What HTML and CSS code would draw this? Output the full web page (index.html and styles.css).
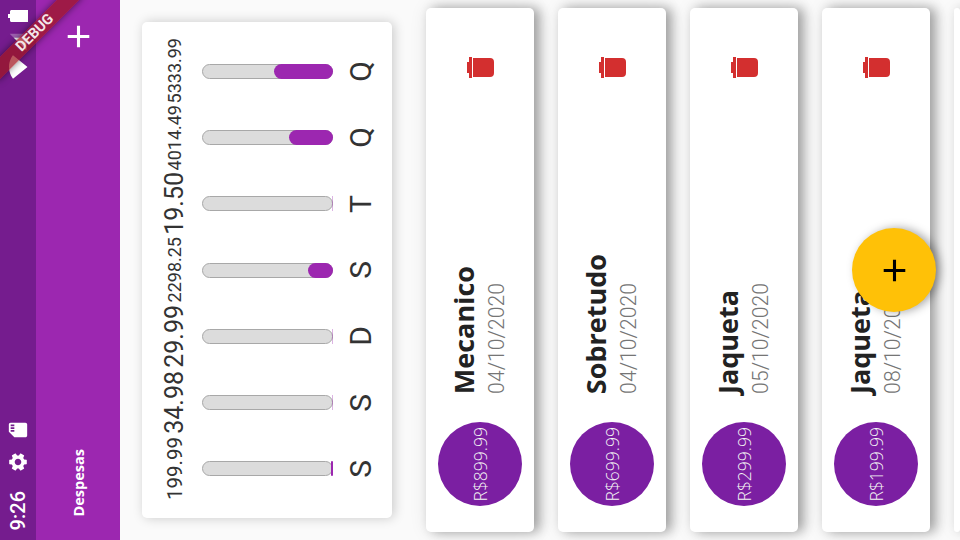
FILE: index.html
```html
<!DOCTYPE html>
<html lang="pt-BR">
<head>
    <meta charset="UTF-8">
    <title>Despesas</title>
    <link rel="stylesheet" href="styles.css">
</head>
<body>

<div class="stage">
    <div class="status">
        <span class="time">9:26</span>
        <svg class="status-icon turned gear" viewBox="0 0 24 24"><path d="M19.14 12.94c.04-.3.06-.61.06-.94 0-.32-.02-.64-.07-.94l2.03-1.58c.18-.14.23-.41.12-.61l-1.92-3.32c-.12-.22-.37-.29-.59-.22l-2.39.96c-.5-.38-1.03-.7-1.62-.94l-.36-2.54c-.04-.24-.24-.41-.48-.41h-3.84c-.24 0-.43.17-.47.41l-.36 2.54c-.59.24-1.13.57-1.62.94l-2.39-.96c-.22-.08-.47 0-.59.22L2.74 8.87c-.12.21-.08.47.12.61l2.03 1.58c-.05.3-.09.63-.09.94s.02.64.07.94l-2.03 1.58c-.18.14-.23.41-.12.61l1.92 3.32c.12.22.37.29.59.22l2.39-.96c.5.38 1.03.7 1.62.94l.36 2.54c.05.24.24.41.48.41h3.84c.24 0 .44-.17.47-.41l.36-2.54c.59-.24 1.13-.56 1.62-.94l2.39.96c.22.08.47 0 .59-.22l1.92-3.32c.12-.22.07-.47-.12-.61l-2.01-1.58zM12 15.6c-1.98 0-3.6-1.62-3.6-3.6s1.62-3.6 3.6-3.6 3.6 1.62 3.6 3.6-1.62 3.6-3.6 3.6z"/></svg>
        <svg class="status-icon turned sd" viewBox="0 0 24 24"><path d="M18 2h-8L4.02 8 4 20c0 1.1.9 2 2 2h12c1.1 0 2-.9 2-2V4c0-1.1-.9-2-2-2zm-6 6h-2V4h2v4zm3 0h-2V4h2v4zm3 0h-2V4h2v4z"/></svg>
        <svg class="status-icon turned wifi" viewBox="0 0 24 24"><path d="M12.01 21.49L23.64 7c-.45-.34-4.93-4-11.64-4C5.28 3 .81 6.66.36 7l11.64 14.49z"/></svg>
        <svg class="status-icon turned cell" viewBox="0 0 24 24"><path fill-opacity=".3" d="M2 22h20V2z"/><path d="M17 7L2 22h15z"/></svg>
        <svg class="status-icon battery" viewBox="0 0 20 12"><path d="M0 4h2V1.500C2 .7 2.700 0 3.500 0H20v12H3.500C2.700 12 2 11.300 2 10.500V8H0z"/></svg>
    </div>

    <div class="appbar">
        <span class="appbar-title">Despesas</span>
        <svg class="plus plus-white" viewBox="0 0 24 24"><path d="M19 13h-6v6h-2v-6H5v-2h6V5h2v6h6v2z"/></svg>
    </div>

    <div class="chart-card">
        <div class="chart-col">
            <span class="chart-value" style="font-size: 20.5px">199.99</span>
            <div class="bar"><div class="bar-fill" style="block-size: 1.7%"></div></div>
            <span class="chart-day">S</span>
        </div>
        <div class="chart-col">
            <span class="chart-value" style="font-size: 25px">34.98</span>
            <div class="bar"><div class="bar-fill bar-fill-thin"></div></div>
            <span class="chart-day">S</span>
        </div>
        <div class="chart-col">
            <span class="chart-value" style="font-size: 25px">29.99</span>
            <div class="bar"><div class="bar-fill bar-fill-thin"></div></div>
            <span class="chart-day">D</span>
        </div>
        <div class="chart-col">
            <span class="chart-value" style="font-size: 18px">2298.25</span>
            <div class="bar"><div class="bar-fill" style="block-size: 19.7%"></div></div>
            <span class="chart-day">S</span>
        </div>
        <div class="chart-col">
            <span class="chart-value" style="font-size: 25px">19.50</span>
            <div class="bar"><div class="bar-fill bar-fill-thin"></div></div>
            <span class="chart-day">T</span>
        </div>
        <div class="chart-col">
            <span class="chart-value" style="font-size: 18px">4014.49</span>
            <div class="bar"><div class="bar-fill" style="block-size: 34.4%"></div></div>
            <span class="chart-day">Q</span>
        </div>
        <div class="chart-col">
            <span class="chart-value" style="font-size: 18px">5333.99</span>
            <div class="bar"><div class="bar-fill" style="block-size: 45.7%"></div></div>
            <span class="chart-day">Q</span>
        </div>
    </div>

    <div class="list">
        <div class="card">
            <div class="avatar">R$899.99</div>
            <div class="card-text">
                <span class="card-title">Mecanico</span>
                <span class="card-date">04/10/2020</span>
            </div>
            <svg class="trash" viewBox="0 0 27 21"><path d="M0 5h2v11H0zM2 0h3v21H2zM6 1h17a4 4 0 0 1 4 4v11a4 4 0 0 1-4 4H6z"/></svg>
        </div>
        <div class="card">
            <div class="avatar">R$699.99</div>
            <div class="card-text">
                <span class="card-title">Sobretudo</span>
                <span class="card-date">04/10/2020</span>
            </div>
            <svg class="trash" viewBox="0 0 27 21"><path d="M0 5h2v11H0zM2 0h3v21H2zM6 1h17a4 4 0 0 1 4 4v11a4 4 0 0 1-4 4H6z"/></svg>
        </div>
        <div class="card">
            <div class="avatar">R$299.99</div>
            <div class="card-text">
                <span class="card-title">Jaqueta</span>
                <span class="card-date">05/10/2020</span>
            </div>
            <svg class="trash" viewBox="0 0 27 21"><path d="M0 5h2v11H0zM2 0h3v21H2zM6 1h17a4 4 0 0 1 4 4v11a4 4 0 0 1-4 4H6z"/></svg>
        </div>
        <div class="card">
            <div class="avatar">R$199.99</div>
            <div class="card-text">
                <span class="card-title">Jaqueta</span>
                <span class="card-date">08/10/2020</span>
            </div>
            <svg class="trash" viewBox="0 0 27 21"><path d="M0 5h2v11H0zM2 0h3v21H2zM6 1h17a4 4 0 0 1 4 4v11a4 4 0 0 1-4 4H6z"/></svg>
        </div>
        <div class="card card-cut"></div>
    </div>

    <button class="fab"><svg class="plus" viewBox="0 0 24 24"><path d="M19 13h-6v6h-2v-6H5v-2h6V5h2v6h6v2z"/></svg></button>
    <div class="banner">DEBUG</div>
</div>

</body>
</html>
```

FILE: styles.css
```css
html, body {
    margin: 0;
    width: 960px;
    height: 540px;
    overflow: hidden;
    background-color: #fafafa;
}

/* the app is on its side: blocks run left to right, text runs bottom to top */
.stage {
    position: relative;
    display: flex;
    flex-direction: column;
    width: 960px;
    height: 540px;
    overflow: hidden;
    writing-mode: sideways-lr;
    background-color: #fafafa;
    font-family: "Open Sans", sans-serif;
}

.status {
    display: flex;
    align-items: center;
    flex: none;
    block-size: 36px;
    padding-inline: 10px;
    background-color: #751c8e;
    color: #fff;
}
.time {
    inline-size: 42px;
    font-family: Roboto, sans-serif;
    font-size: 20px;
    font-weight: 500;
}
.status-icon {
    flex: none;
    fill: #fff;
}
.turned {
    transform: rotate(-90deg);
}
.gear {
    width: 22px;
    height: 22px;
    margin-inline-start: 15px;
}
.sd {
    width: 22px;
    height: 22px;
    margin-inline-start: 10px;
}
.wifi {
    width: 24px;
    height: 24px;
    margin-inline-start: auto;
}
.cell {
    width: 20px;
    height: 20px;
    margin-inline-start: 3px;
}
.battery {
    width: 20px;
    height: 12px;
    margin-inline-start: 10px;
}

.appbar {
    display: flex;
    align-items: center;
    justify-content: space-between;
    flex: none;
    block-size: 84px;
    padding-inline: 24px 18px;
    background-color: #9c27b0;
}
.appbar-title {
    color: #fff;
    font-size: 14.5px;
    font-weight: 700;
}
.plus {
    display: block;
    width: 37px;
    height: 37px;
}
.plus-white {
    fill: #fff;
}

.chart-card {
    display: flex;
    flex: none;
    block-size: 250px;
    margin-block-start: 22px;
    margin-inline: 22px;
    padding-inline: 16px;
    box-sizing: border-box;
    background: #fff;
    border-radius: 5px;
    box-shadow: 2px 0 12px rgba(0, 0, 0, 0.2);
}
.chart-col {
    display: flex;
    flex-direction: column;
    align-items: center;
    flex: 1;
    min-inline-size: 0;
}
.chart-value {
    block-size: 20px;
    margin-block-start: 23px;
    line-height: 20px;
    font-family: Roboto, sans-serif;
    color: #333;
    white-space: nowrap;
}
.bar {
    position: relative;
    inline-size: 15px;
    block-size: 131px;
    margin-block-start: 17px;
    box-sizing: border-box;
    background-color: #dcdcdc;
    border: 1px solid #a8a8a8;
    border-radius: 8px;
}
.bar-fill {
    position: absolute;
    inset-inline: -1px;
    inset-block-end: -1px;
    background-color: #9c27b0;
    border-radius: 8px;
}
.bar-fill-thin {
    block-size: 1px;
    border-radius: 0;
    opacity: 0.35;
}
.chart-day {
    margin-block-start: 10px;
    line-height: 36px;
    font-family: Roboto, sans-serif;
    font-size: 30px;
    color: #333;
}

.list {
    display: flex;
    flex-direction: column;
    flex: 1;
    min-block-size: 0;
    gap: 24px;
    padding-block-start: 34px;
}
.card {
    display: flex;
    align-items: center;
    flex: none;
    block-size: 108px;
    margin-inline: 8px;
    padding-inline: 26px 49px;
    box-sizing: border-box;
    background: #fff;
    border-radius: 5px;
    box-shadow: 6px 0 12px rgba(0, 0, 0, 0.32), 1px 0 18px rgba(0, 0, 0, 0.1);
}
/* only the edge of the next card is on screen */
.card-cut {
    flex: 1;
    block-size: auto;
}
.avatar {
    display: flex;
    align-items: center;
    justify-content: center;
    flex: none;
    inline-size: 84px;
    block-size: 84px;
    border-radius: 50%;
    background-color: #7b1fa2;
    color: #f4f4f4;
    font-size: 17.5px;
    font-weight: 300;
}
.card-text {
    display: flex;
    flex-direction: column;
    margin-inline-start: 28px;
    padding-block-end: 1px;
}
.card-title {
    font-size: 27px;
    font-weight: 700;
    line-height: 32px;
    color: #222;
}
.card-date {
    margin-block-start: 3px;
    font-family: Roboto, sans-serif;
    font-size: 21.2px;
    font-weight: 300;
    line-height: 28px;
    color: #757575;
}
.trash {
    width: 27px;
    height: 21px;
    margin-inline-start: auto;
    fill: #d32f2f;
}

.fab {
    position: absolute;
    left: 852px;
    top: 228px;
    display: flex;
    align-items: center;
    justify-content: center;
    width: 84px;
    height: 84px;
    padding: 0;
    border: none;
    border-radius: 50%;
    background-color: #ffc107;
    box-shadow: 4px 0 10px rgba(0, 0, 0, 0.35);
}

.banner {
    position: absolute;
    left: -25px;
    top: 25px;
    width: 120px;
    height: 16px;
    writing-mode: horizontal-tb;
    line-height: 16px;
    text-align: center;
    font-family: Roboto, sans-serif;
    font-size: 14.5px;
    font-weight: 700;
    color: #f3e6ea;
    background-color: rgba(160, 22, 30, 0.72);
    box-shadow: 0 0 7px rgba(0, 0, 0, 0.5);
    transform: rotate(-45deg);
}
```
